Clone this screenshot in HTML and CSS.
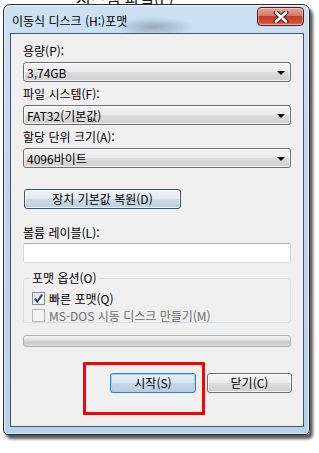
FILE: index.html
```html
<!DOCTYPE html>
<html lang="ko">

<head>
    <meta charset="utf-8">
    <title>이동식 디스크 (H:)포맷</title>
    <link rel="stylesheet" href="styles.css">
</head>

<body>
    <div class="backdrop"><span>시스템 파일(F)</span></div>
    <div class="window">
        <div class="titlebar">
            <span class="title">이동식 디스크 (H:)포맷</span>
            <button class="closeX" type="button">
                <svg width="16" height="12" viewBox="0 0 16 12">
                    <path d="M3 1.5 L13 10.5 M13 1.5 L3 10.5" stroke="#3a1a14" stroke-width="4.6" stroke-linecap="round" fill="none" />
                    <path d="M3 1.5 L13 10.5 M13 1.5 L3 10.5" stroke="#fff" stroke-width="2.6" stroke-linecap="round" fill="none" />
                </svg>
            </button>
        </div>
        <div class="client">
            <div class="label first">용량(P):</div>
            <div class="combo"><span>3,74GB</span><i class="arrow"></i></div>

            <div class="label">파일 시스템(F):</div>
            <div class="combo"><span>FAT32(기본값)</span><i class="arrow"></i></div>

            <div class="label">할당 단위 크기(A):</div>
            <div class="combo"><span>4096바이트</span><i class="arrow"></i></div>

            <button class="btn restoreBtn" type="button">장치 기본값 복원(D)</button>

            <div class="label volume">볼륨 레이블(L):</div>
            <input class="textbox" type="text">

            <fieldset class="options">
                <legend>포맷 옵션(O)</legend>
                <label class="check">
                    <span class="box">
                        <svg width="11" height="11" viewBox="0 0 11 11">
                            <path d="M1.8 5.6 L4.2 8.6 L9.2 1.6" stroke="#1f3f86" stroke-width="2" fill="none" />
                        </svg>
                    </span>
                    빠른 포맷(Q)
                </label>
                <label class="check disabled">
                    <span class="box"></span>
                    MS-DOS 시동 디스크 만들기(M)
                </label>
            </fieldset>

            <div class="progress"></div>

            <div class="actions">
                <button class="btn startBtn" type="button">시작(S)</button>
                <button class="btn closeBtn" type="button">닫기(C)</button>
            </div>

            <div class="highlight"></div>
        </div>
    </div>
</body>

</html>
```

FILE: styles.css
```css
body {
    margin: 0;
    width: 319px;
    height: 453px;
    overflow: hidden;
    background-color: #fff;
    font-family: "Noto Sans CJK KR", "Liberation Sans", sans-serif;
    font-size: 12px;
    color: #000;
}

/* the window behind, only its last pixels show */
.backdrop {
    height: 4px;
    overflow: hidden;
    padding-left: 76px;
    font-size: 16px;
    color: #1a1a1a;
}

.backdrop span {
    display: block;
    line-height: 16px;
    margin-top: -10px;
}

.window {
    box-sizing: border-box;
    width: 307px;
    height: 431px;
    margin-left: 3px;
    padding: 0 5px 7px 6px;
    border: 1px solid #2c2c2c;
    border-radius: 7px 7px 5px 5px;
    background:
        radial-gradient(ellipse 40px 10px at 150px 22px, rgba(60, 70, 90, 0.35), rgba(60, 70, 90, 0) 100%),
        linear-gradient(#cde1f5, #bed6ee 40%, #b9d2eb);
    box-shadow: inset 0 0 0 1px rgba(255, 255, 255, 0.6), 3px 4px 3px rgba(0, 0, 0, 0.65);
}

.titlebar {
    display: flex;
    align-items: flex-start;
    height: 28px;
}

.title {
    padding-top: 8px;
    padding-left: 2px;
    line-height: 16px;
}

.closeX {
    display: flex;
    align-items: center;
    justify-content: center;
    margin-left: auto;
    margin-top: 2px;
    width: 47px;
    height: 19px;
    padding: 0;
    border: 1px solid #5d1a12;
    border-radius: 4px;
    background: linear-gradient(#e9a99a, #d47865 45%, #c0402b 50%, #c9503a 85%, #e0866f);
    box-shadow: inset 0 0 0 1px rgba(255, 255, 255, 0.35);
}

.client {
    position: relative;
    box-sizing: border-box;
    height: 394px;
    padding: 8px 12px 0 12px;
    border: 1px solid #475669;
    background-color: #f0f0f0;
}

.label {
    height: 16px;
    line-height: 16px;
    margin-top: 4px;
    margin-bottom: 3px;
    white-space: nowrap;
}

.label.first {
    margin-top: 1px;
}

.label.volume {
    margin-top: 16px;
    margin-bottom: 2px;
}

.combo {
    display: flex;
    align-items: center;
    box-sizing: border-box;
    height: 20px;
    padding-left: 3px;
    padding-right: 5px;
    border: 1px solid #707070;
    border-radius: 3px;
    background: linear-gradient(#f3f3f3, #ebebeb 50%, #dddddd 50%, #d0d0d0);
    box-shadow: inset 0 0 0 1px rgba(255, 255, 255, 0.7);
}

.arrow {
    margin-left: auto;
    width: 0;
    height: 0;
    margin-top: 2px;
    border-left: 4px solid transparent;
    border-right: 4px solid transparent;
    border-top: 4px solid #000;
}

.btn {
    box-sizing: border-box;
    height: 20px;
    padding: 0;
    border: 1px solid #707070;
    border-radius: 3px;
    font-family: inherit;
    font-size: 12px;
    line-height: 16px;
    color: #000;
    background: linear-gradient(#f3f3f3, #ebebeb 50%, #dddddd 50%, #cfcfcf);
    box-shadow: inset 0 0 0 1px rgba(255, 255, 255, 0.7);
}

.restoreBtn {
    display: block;
    width: 157px;
    margin-top: 21px;
    margin-left: 1px;
    border-color: #3f5468;
    background: linear-gradient(#eef3f7, #e1eaf1 50%, #cddbe6 50%, #bccfdd);
}

.textbox {
    display: block;
    box-sizing: border-box;
    width: 100%;
    height: 20px;
    margin: 0;
    border: 1px solid #d5dbe2;
    border-top-color: #abadb3;
    border-radius: 2px;
    background-color: #fff;
}

.options {
    margin: 7px 0 0 0;
    padding: 4px 8px 7px 8px;
    height: 53px;
    box-sizing: border-box;
    border: 1px solid #d5dfe5;
    border-radius: 3px;
}

.options legend {
    margin-left: -2px;
    padding: 0 2px;
    line-height: 16px;
}

.check {
    display: flex;
    align-items: center;
    height: 17px;
    white-space: nowrap;
}

.check .box {
    display: flex;
    align-items: center;
    justify-content: center;
    box-sizing: border-box;
    width: 13px;
    height: 13px;
    margin-right: 4px;
    border: 1px solid #8f8f8f;
    background: linear-gradient(135deg, #dcdcdc, #f6f6f6 70%, #fff);
    box-shadow: inset 0 0 0 1px #f4f4f4;
}

.check.disabled {
    color: #6d6d6d;
}

.check.disabled .box {
    border-color: #bcbcbc;
    background: #f4f4f4;
}

.progress {
    box-sizing: border-box;
    height: 12px;
    margin-top: 12px;
    border: 1px solid #b2b2b2;
    border-radius: 3px;
    background: linear-gradient(#f4f4f4, #e4e4e4 35%, #cbcbcb 65%, #dadada);
}

.actions {
    display: flex;
    justify-content: flex-end;
    gap: 11px;
    margin-top: 26px;
    margin-right: -1px;
}

.startBtn {
    width: 86px;
    border-color: #3c7fb1;
    background: linear-gradient(#e6eff6, #dae6ef 50%, #c6d8e6 50%, #b6cde0);
    box-shadow: inset 0 0 0 1px #9fd4f3;
}

.closeBtn {
    width: 85px;
}

/* annotation drawn over the dialog */
.highlight {
    position: absolute;
    left: 72px;
    top: 328px;
    width: 122px;
    height: 53px;
    box-sizing: border-box;
    border: 3px solid #f00;
    box-shadow: 0 0 0 1px #fff;
}
```
